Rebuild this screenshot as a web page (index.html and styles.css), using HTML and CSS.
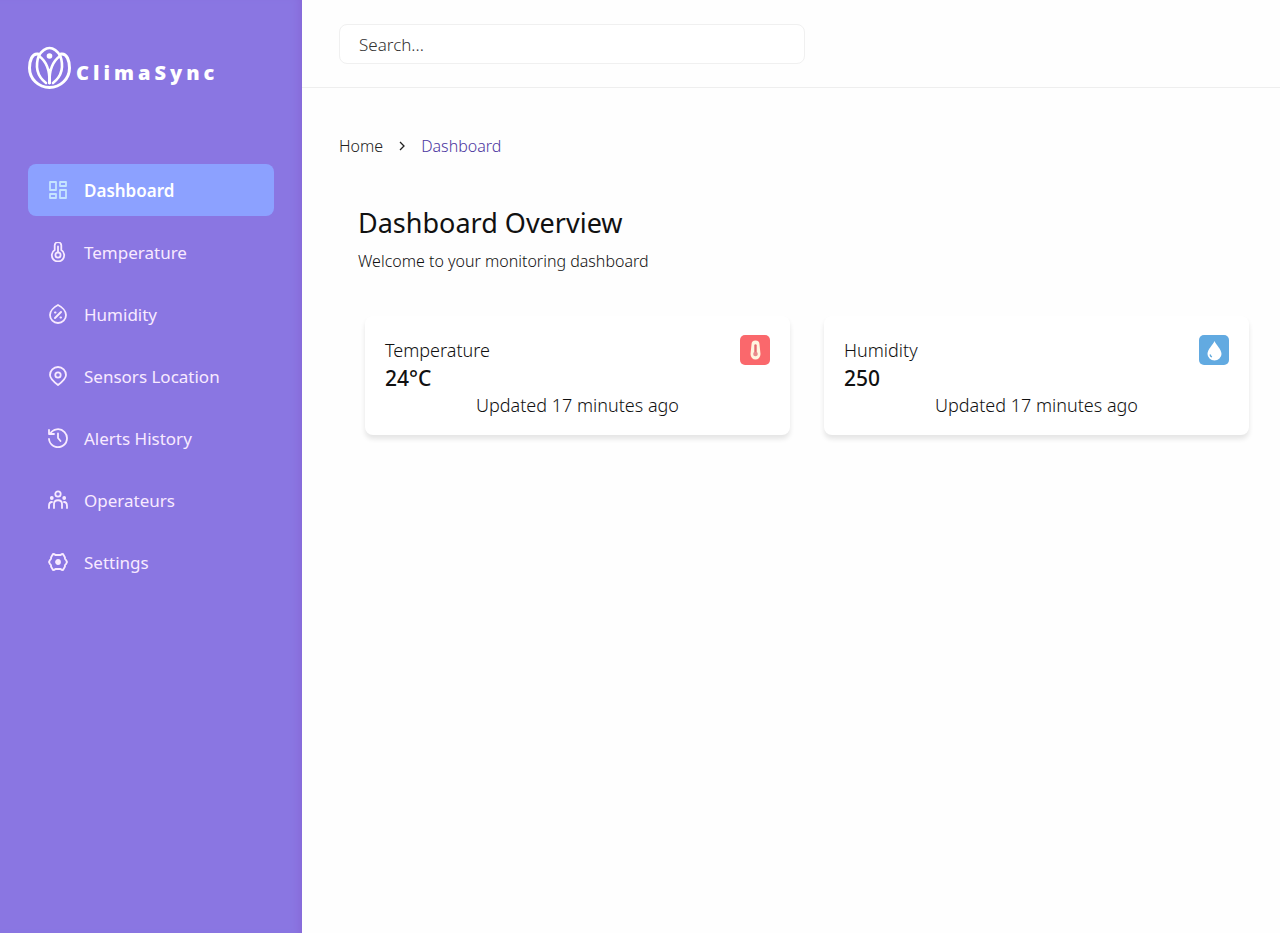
FILE: index.html
```html
<!DOCTYPE html>
<html lang="en">
<head>
<meta charset="utf-8">
<meta name="viewport" content="width=device-width, initial-scale=1">
<title>ClimaSync</title>
<link rel="stylesheet" href="styles.css">
</head>
<body>
<div class="app">
  <aside class="sidebar">
    <a class="brand" href="#">
      <svg class="brand-mark" viewBox="0 0 44 44" fill="none" stroke="currentColor" stroke-width="2.600" stroke-linejoin="round" stroke-linecap="round" aria-hidden="true">
        <path d="M10 8C4 7 1.500 15 1.500 22a20 19.500 0 0 0 40 0c0-7-2.500-15-8.500-14" stroke-width="3"/>
        <path d="M11 10C13 5 18 2 21.500 2S30 5 32 10"/>
        <path d="M11 9C7 20 9 30 18 37M11 10c7 5 11 13 10.500 27"/>
        <path d="M32 9c4 11 2 21-7 28M32 10c-7 5-11 13-10.500 27"/>
        <path d="M21.500 24v13"/>
        <circle cx="21.500" cy="10" r="2.800" fill="currentColor" stroke="none"/>
      </svg>
      <span class="brand-name">ClimaSync</span>
    </a>
    <nav class="nav" aria-label="Main">
      <a class="nav-item active" href="#" aria-current="page">
        <svg class="icon" viewBox="0 0 20 20" aria-hidden="true"><path d="M2 2h6v8H2zM12 2h6v4h-6zM12 10h6v8h-6zM2 14h6v4H2z"/></svg>
        Dashboard</a>
      <a class="nav-item" href="#">
        <svg class="icon" viewBox="0 0 20 20" aria-hidden="true"><path d="M6.700 8V3.500a3.300 3.300 0 0 1 6.600 0V8a6.200 6.200 0 1 1-6.600 0z"/><circle cx="10" cy="13" r="2.600"/><path d="M10 4.500v6"/></svg>
        Temperature</a>
      <a class="nav-item" href="#">
        <svg class="icon" viewBox="0 0 20 20" aria-hidden="true"><path d="M10 1C6 3 2 7 2 11a8 8 0 0 0 16 0c0-4-4-8-8-10z"/><path d="M13 8l-6 6M7 8.500h.5M12.500 13.500h.5" stroke-width="2"/></svg>
        Humidity</a>
      <a class="nav-item" href="#">
        <svg class="icon" viewBox="0 0 20 20" aria-hidden="true"><path d="M10 19C6 16 2 13 2 9a8 8 0 0 1 16 0c0 4-4 7-8 10z"/><circle cx="10" cy="9" r="2.700"/></svg>
        Sensors Location</a>
      <a class="nav-item" href="#">
        <svg class="icon" viewBox="0 0 20 20" aria-hidden="true"><path d="M1 2v4h5M2 6a9 9 0 1 1-1 5M10 5.500V10l2.500 3"/></svg>
        Alerts History</a>
      <a class="nav-item" href="#">
        <svg class="icon" viewBox="0 0 20 20" aria-hidden="true"><circle cx="10" cy="4" r="2.700"/><path d="M6 18v-4c0-5 8-5 8 0v4M1 18v-2c0-2 1-4 3-4M19 18v-2c0-2-1-4-3-4"/><circle cx="3.800" cy="8" r="1"/><circle cx="16.200" cy="8" r="1"/></svg>
        Operateurs</a>
      <a class="nav-item" href="#">
        <svg class="icon" viewBox="0 0 20 20" aria-hidden="true"><path d="M5 2q1.500 0 2.500 1h5q1-1 2.500-1l2 3.500q-.5 1.500 1 2.500l1 2-1 2q-1.500 1-1 2.500l-2 3.500q-1.500 0-2.500-1h-5q-1 1-2.500 1l-2-3.500q.5-1.500-1-2.500l-1-2 1-2q1.500-1 1-2.500z"/><circle cx="10" cy="10" r="2" fill="currentColor"/></svg>
        Settings</a>
    </nav>
  </aside>
  <div class="content">
    <header class="topbar">
      <input class="search" type="search" placeholder="Search..." aria-label="Search">
    </header>
    <main class="main">
      <nav class="breadcrumb" aria-label="Breadcrumb">
        <a href="#">Home</a>
        <svg class="chevron" viewBox="0 0 10 10" aria-hidden="true"><path d="M3 1l4 4-4 4"/></svg>
        <a class="current" href="#" aria-current="page">Dashboard</a>
      </nav>
      <section class="overview">
        <h1 class="title">Dashboard Overview</h1>
        <p class="subtitle">Welcome to your monitoring dashboard</p>
        <div class="cards">
          <article class="card">
            <div class="card-head">
              <h2 class="card-label">Temperature</h2>
              <span class="badge badge-red"><svg viewBox="0 0 30 30" aria-hidden="true"><path d="M11.500 9.500a4 4 0 0 1 8 0l1 9.500a5 5.500 0 0 1-10 0z" fill="#fff4df"/><path d="M15.500 10.500v8" stroke="#e66a70" stroke-width="2.400" stroke-linecap="round"/><circle cx="15.500" cy="19" r="2.300" fill="#e98a8c"/></svg></span>
            </div>
            <p class="card-value">24°C</p>
            <p class="card-note">Updated 17 minutes ago</p>
          </article>
          <article class="card">
            <div class="card-head">
              <h2 class="card-label">Humidity</h2>
              <span class="badge badge-blue"><svg viewBox="0 0 30 30" aria-hidden="true"><path d="M15.500 6C14 10 8.500 14 8.500 19a7 6.500 0 0 0 14 0c0-5-5.500-9-7-13z" fill="#fff"/><path d="M11 19.500q.5 2 2 2.500" stroke="#62aadd" fill="none" stroke-width="1.200"/></svg></span>
            </div>
            <p class="card-value">250</p>
            <p class="card-note">Updated 17 minutes ago</p>
          </article>
        </div>
      </section>
    </main>
  </div>
</div>
</body>
</html>
```
FILE: styles.css
```css
* { box-sizing: border-box; }

body {
  margin: 0;
  background: #fefefe;
  color: #111;
  font-family: "Noto Sans", "Open Sans", sans-serif;
  font-weight: 300;
}

a { color: inherit; text-decoration: none; }
h1, h2, p { margin: 0; }

.app { display: flex; min-height: 100vh; }

.sidebar {
  flex: 0 0 302px;
  padding: 46px 28px;
  background: #8a76e2;
  box-shadow: inset -8px 0 8px -6px #8767d6;
  color: #fff;
}

.brand { display: flex; align-items: center; height: 44px; gap: 4px; }
.brand-mark { width: 44px; height: 44px; flex: none; }
.brand-name {
  padding-top: 10px;
  font-size: 20px;
  font-weight: 900;
  line-height: 24px;
  letter-spacing: 4px;
}

.nav { display: flex; flex-direction: column; gap: 10px; margin-top: 74px; }
.nav-item {
  display: flex;
  align-items: center;
  gap: 16px;
  height: 52px;
  padding: 0 20px;
  border-radius: 8px;
  color: #f8eaff;
  font-size: 17px;
  font-weight: 400;
}
.nav-item.active { background: #8ca1ff; color: #fff; font-weight: 600; }
.icon {
  width: 20px;
  height: 20px;
  fill: none;
  stroke: currentColor;
  stroke-width: 1.8;
  stroke-linecap: round;
  stroke-linejoin: round;
}
.active .icon { stroke: #c5e4ff; }

.content { flex: 1; min-width: 0; }
.topbar { padding: 24px 37px 23px; border-bottom: 1px solid #eee; }
.search {
  display: block;
  width: 100%;
  max-width: 466px;
  height: 40px;
  padding: 0 19px;
  border: 1px solid #f0f0f0;
  border-radius: 8px;
  background: #fff;
  color: #333;
  font: inherit;
  font-size: 17px;
}
.search::placeholder { color: #333; opacity: 1; }

.main { padding: 46px 31px 40px 37px; }
.breadcrumb {
  display: flex;
  align-items: center;
  gap: 14px;
  color: #222;
  font-size: 16px;
  line-height: 24px;
}
.current { color: #4c35a0; }
.chevron { width: 10px; height: 10px; fill: none; stroke: #222; stroke-width: 1.3; }

.overview { padding: 45px 0 0 19px; }
.title { font-size: 27px; font-weight: 400; line-height: 40px; }
.subtitle { margin-top: 6px; font-size: 16px; line-height: 24px; }

.cards {
  display: grid;
  grid-template-columns: repeat(auto-fit, minmax(280px, 1fr));
  gap: 34px;
  margin: 43px 0 0 7px;
}
.card {
  padding: 19px 20px 16px;
  border-radius: 8px;
  background: #fff;
  box-shadow: 0 4px 5px rgba(0, 0, 0, 0.1);
}
.card-head { display: flex; align-items: center; justify-content: space-between; }
.card-label { font-size: 18px; font-weight: 300; line-height: 28px; }
.card-value { font-size: 21px; font-weight: 500; line-height: 26px; }
.card-note { font-size: 18px; line-height: 28px; text-align: center; }
.badge { display: flex; width: 30px; height: 30px; border-radius: 5px; }
.badge svg { width: 30px; height: 30px; fill: none; }
.badge-red { background: #fa686c; }
.badge-blue { background: #62aae1; }
```
